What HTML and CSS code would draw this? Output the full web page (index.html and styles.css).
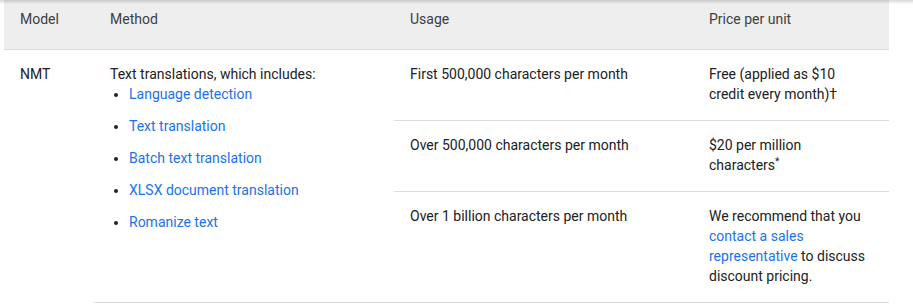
FILE: index.html
```html
<!DOCTYPE html>
<html lang="en">
<head>
<meta charset="utf-8">
<link rel="stylesheet" href="styles.css">
</head>
<body>
<div class="shadow"></div>
<table class="pricing">
  <colgroup>
    <col class="c-model">
    <col class="c-method">
    <col class="c-usage">
    <col class="c-price">
  </colgroup>
  <thead>
    <tr>
      <th>Model</th>
      <th>Method</th>
      <th>Usage</th>
      <th>Price per unit</th>
    </tr>
  </thead>
  <tbody>
    <tr>
      <td rowspan="3" class="model">NMT</td>
      <td rowspan="3">
        Text translations, which includes:
        <ul class="methods">
          <li><a href="#">Language detection</a></li>
          <li><a href="#">Text translation</a></li>
          <li><a href="#">Batch text translation</a></li>
          <li><a href="#">XLSX document translation</a></li>
          <li><a href="#">Romanize text</a></li>
        </ul>
      </td>
      <td>First 500,000 characters per month</td>
      <td>Free (applied as $10 credit every month)†</td>
    </tr>
    <tr>
      <td>Over 500,000 characters per month</td>
      <td>$20 per million characters<sup>*</sup></td>
    </tr>
    <tr>
      <td>Over 1 billion characters per month</td>
      <td>We recommend that you <a href="#">contact a sales representative</a> to discuss discount pricing.</td>
    </tr>
  </tbody>
</table>
</body>
</html>
```
FILE: styles.css
```css
html, body {
  margin: 0;
  padding: 0;
  background: #fff;
}
body {
  height: 306px;
  overflow: hidden;
  font-family: Roboto, "Liberation Sans", sans-serif;
  font-size: 14px;
  line-height: 20px;
  color: #202124;
  -webkit-font-smoothing: antialiased;
}
.shadow {
  position: absolute;
  top: 0;
  left: 0;
  right: 0;
  height: 5px;
  background: linear-gradient(to bottom, rgba(0,0,0,0.16), rgba(0,0,0,0.04) 60%, rgba(0,0,0,0));
  z-index: 2;
}
.pricing {
  margin-left: 4px;
  width: 885px;
  border-collapse: collapse;
  table-layout: fixed;
}
.c-model { width: 90px; }
.c-method { width: 300px; }
.c-usage { width: 299px; }
.c-price { width: 196px; }
.pricing th {
  background: #eeeeee;
  font-weight: 400;
  text-align: left;
  color: #3c4043;
  padding: 9px 16px 20px;
  border-bottom: 1px solid #dadce0;
  vertical-align: top;
}
.pricing td {
  padding: 14px 16px 16px;
  vertical-align: top;
  border-bottom: 1px solid #dadce0;
}
.pricing td.model {
  border-bottom: none;
}
.pricing a {
  color: #1a73e8;
  text-decoration: none;
}
.pricing sup {
  font-size: 10px;
  line-height: 0;
  vertical-align: 5px;
}
.methods {
  margin: 0;
  padding-left: 19px;
}
.methods li + li {
  margin-top: 12px;
}
```
